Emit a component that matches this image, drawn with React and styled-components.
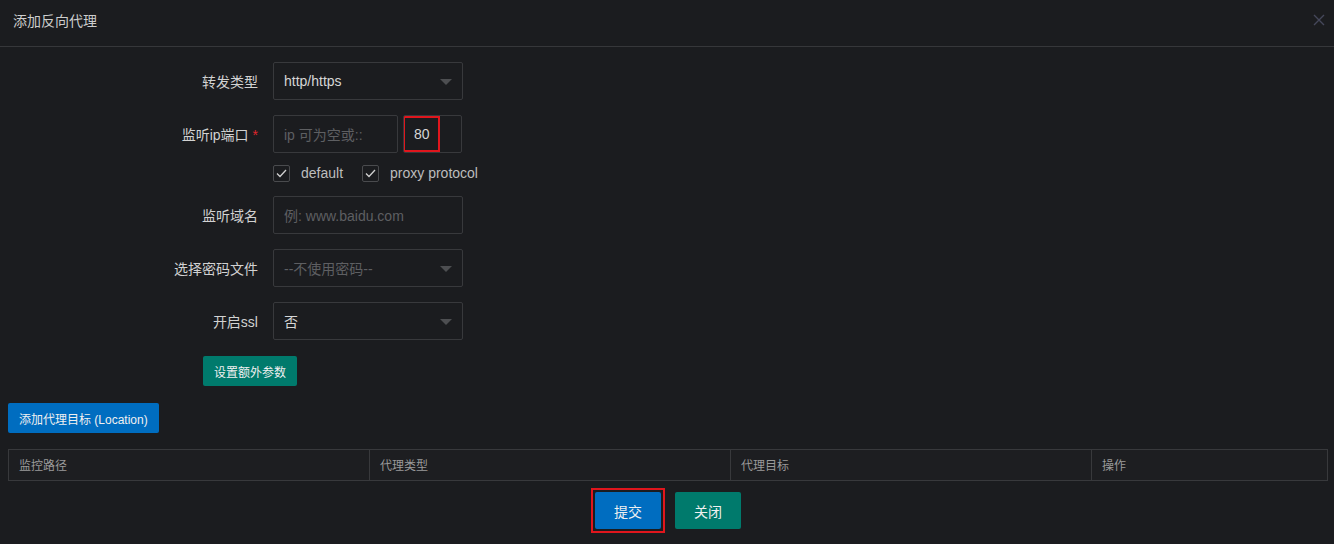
import React from "react";
import styled, { createGlobalStyle } from "styled-components";

const Global = createGlobalStyle`
  html, body {
    margin: 0;
    background: #1b1c1f;
  }
  body {
    font-family: "Liberation Sans", "Noto Sans CJK SC", sans-serif;
    font-size: 14px;
    color: #cfcfcf;
  }
`;

const Page = styled.div`
  width: 1334px;
  height: 544px;
  overflow: hidden;
  background: #1b1c1f;
`;

const Header = styled.div`
  height: 47px;
  box-sizing: border-box;
  border-bottom: 1px solid #36373a;
  display: flex;
  align-items: center;
  justify-content: space-between;
  padding: 0 9px 6px 13px;
`;

const Title = styled.div`
  font-size: 14px;
  color: #cdcdcd;
`;

const Close = styled.svg`
  width: 12px;
  height: 12px;
  display: block;
`;

const Form = styled.div`
  padding-top: 15px;
  display: flex;
  flex-direction: column;
`;

const Row = styled.div`
  display: flex;
  align-items: center;
  margin-bottom: 15px;
`;

const Label = styled.div`
  width: 258px;
  margin-right: 15px;
  text-align: right;
  color: #d2d2d2;
  font-size: 14px;
  flex-shrink: 0;
`;

const Star = styled.span`
  color: #e0262d;
  margin-left: 4px;
`;

const Field = styled.div`
  position: relative;
  width: ${(p) => p.$w ?? 190}px;
  height: 38px;
  box-sizing: border-box;
  border: 1px solid #38393c;
  border-radius: 2px;
  display: flex;
  align-items: center;
  padding-left: 10px;
  padding-bottom: 1px;
  margin-right: ${(p) => p.$mr ?? 0}px;
  color: ${(p) => (p.$muted ? "#5e5f62" : "#d6d6d6")};
  font-size: 14px;
  white-space: nowrap;
  overflow: hidden;
`;

const Arrow = styled.span`
  position: absolute;
  right: 10px;
  top: 16px;
  width: 0;
  height: 0;
  border-left: 6px solid transparent;
  border-right: 6px solid transparent;
  border-top: 6px solid #4d4e51;
`;

const Mark = styled.span`
  position: absolute;
  left: -1px;
  top: 0px;
  width: 37px;
  height: 36px;
  box-sizing: border-box;
  border: 2px solid #e0161d;
`;

const Checks = styled.div`
  display: flex;
  align-items: center;
  margin-left: 273px;
  margin-bottom: 14px;
  margin-top: -4px;
  height: 18px;
`;

const Check = styled.label`
  display: flex;
  align-items: center;
  color: #bdbdbd;
  font-size: 14px;
  margin-right: 19px;
`;

const Box = styled.span`
  width: 17px;
  height: 17px;
  box-sizing: border-box;
  border: 1px solid #4a4b4e;
  border-radius: 2px;
  display: flex;
  align-items: center;
  justify-content: center;
  margin-right: 11px;
`;

const Button = styled.button`
  display: block;
  font-family: inherit;
  border: none;
  border-radius: 2px;
  color: #f0f0f0;
  font-size: ${(p) => (p.$big ? 14 : 12)}px;
  height: ${(p) => (p.$big ? 37 : 30)}px;
  padding: 0 ${(p) => (p.$big ? 19 : 11)}px;
  background: ${(p) => (p.$tone === "blue" ? "#006dc0" : "#007a6c")};
  cursor: pointer;
`;

const Highlight = styled.div`
  border: 2px solid #e0161d;
  padding: 2px;
  margin: -4px;
`;

const ExtraRow = styled.div`
  padding-left: 203px;
  margin-top: 1px;
  margin-bottom: 17px;
`;

const LocationRow = styled.div`
  padding-left: 8px;
  margin-bottom: 16px;
`;

const Table = styled.div`
  margin: 0 6px 0 8px;
  display: grid;
  grid-template-columns: 360px 361px 361px 1fr;
  border: 1px solid #38393c;
  background: #1d1e21;
  height: 32px;
  box-sizing: border-box;
`;

const Th = styled.div`
  display: flex;
  align-items: center;
  padding-left: 10px;
  padding-bottom: 1px;
  color: #9a9a9a;
  font-size: 12px;
  border-left: ${(p) => (p.$first ? "none" : "1px solid #38393c")};
`;

const Footer = styled.div`
  display: flex;
  justify-content: center;
  align-items: center;
  gap: 14px;
  margin-top: 11px;
  padding-left: 2px;
`;

const tick = (
  <svg width="11" height="9" viewBox="0 0 11 9">
    <path d="M1 4.5 L4 7.5 L10 1" fill="none" stroke="#d0d0d0" strokeWidth="1.3" />
  </svg>
);

export default function App() {
  return (
    <Page>
      <Global />
      <Header>
        <Title>添加反向代理</Title>
        <Close viewBox="0 0 12 12">
          <path d="M1 1 L11 11 M11 1 L1 11" stroke="#45475a" strokeWidth="1.4" />
        </Close>
      </Header>
      <Form>
        <Row>
          <Label>转发类型</Label>
          <Field>
            http/https
            <Arrow />
          </Field>
        </Row>
        <Row>
          <Label>
            监听ip端口<Star>*</Star>
          </Label>
          <Field $w={125} $mr={5} $muted>
            ip 可为空或::
          </Field>
          <Field $w={59}>
            80
            <Mark />
          </Field>
        </Row>
        <Checks>
          <Check>
            <Box>{tick}</Box>default
          </Check>
          <Check>
            <Box>{tick}</Box>proxy protocol
          </Check>
        </Checks>
        <Row>
          <Label>监听域名</Label>
          <Field $muted>例: www.baidu.com</Field>
        </Row>
        <Row>
          <Label>选择密码文件</Label>
          <Field $muted>
            --不使用密码--
            <Arrow />
          </Field>
        </Row>
        <Row>
          <Label>开启ssl</Label>
          <Field>
            否
            <Arrow />
          </Field>
        </Row>
        <ExtraRow>
          <Button>设置额外参数</Button>
        </ExtraRow>
        <LocationRow>
          <Button $tone="blue">添加代理目标 (Location)</Button>
        </LocationRow>
        <Table>
          <Th $first>监控路径</Th>
          <Th>代理类型</Th>
          <Th>代理目标</Th>
          <Th>操作</Th>
        </Table>
        <Footer>
          <Highlight>
            <Button $big $tone="blue">
              提交
            </Button>
          </Highlight>
          <Button $big>关闭</Button>
        </Footer>
      </Form>
    </Page>
  );
}
